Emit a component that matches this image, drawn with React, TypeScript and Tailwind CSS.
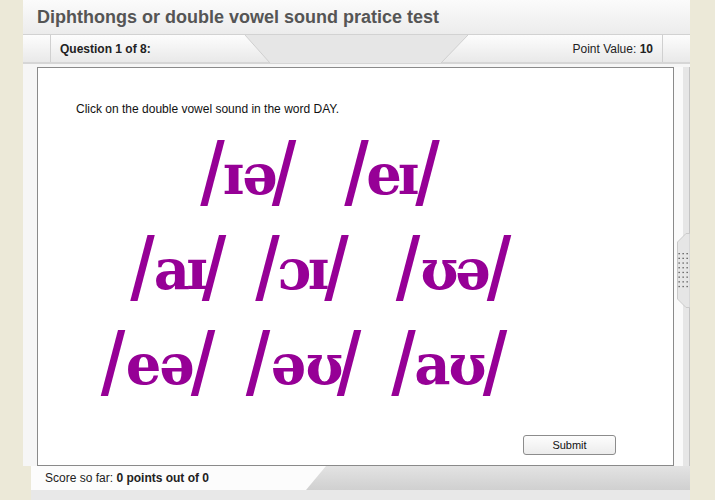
import React from 'react'

// centres of each glyph's ink, measured off the reference (svg coordinates)
const sounds: { y: number; parts: [string, number][] }[] = [
  { y: 75, parts: [['/', 136.5], ['ɪ', 157.5], ['ə', 184], ['/', 208]] },
  { y: 75, parts: [['/', 280.5], ['e', 308], ['ɪ', 332.5], ['/', 351.5]] },
  { y: 170, parts: [['/', 66.5], ['a', 96], ['ɪ', 121], ['/', 138]] },
  { y: 170, parts: [['/', 191.5], ['ɔ', 218.5], ['ɪ', 242.5], ['/', 260.5]] },
  { y: 170, parts: [['/', 332], ['ʊ', 363.5], ['ə', 397], ['/', 423]] },
  { y: 265, parts: [['/', 37], ['e', 67.5], ['ə', 101], ['/', 127]] },
  { y: 265, parts: [['/', 182], ['ə', 212.5], ['ʊ', 248.5], ['/', 273]] },
  { y: 265, parts: [['/', 327.5], ['a', 356.5], ['ʊ', 391.5], ['/', 419]] },
]

function SoundChart() {
  return (
    <svg width="470" height="305" viewBox="0 0 470 305" className="block bg-white">
      {sounds.map((s, i) => (
        <g key={i} fill="#960096" fontWeight="bold" textAnchor="middle">
          {s.parts.map(([ch, cx], j) =>
            ch === '/' ? (
              <text
                key={j}
                transform={`translate(${cx} ${s.y + 5}) scale(0.84 1)`}
                fontSize="80"
                style={{ fontFamily: '"DejaVu Sans", sans-serif' }}
              >
                /
              </text>
            ) : (
              <text key={j} x={cx} y={s.y} fontSize="56" style={{ fontFamily: '"DejaVu Serif", serif' }}>
                {ch}
              </text>
            )
          )}
        </g>
      ))}
    </svg>
  )
}

function Grip() {
  return (
    <svg width="16" height="75" viewBox="0 0 16 75" className="absolute left-0 top-[166px]">
      <path d="M12 0.5 H16 V74.5 H12 L3.5 66 V9 Z" fill="#e6e6e6" stroke="#cacaca" />
      {Array.from({ length: 8 }).map((_, r) =>
        [0, 1, 2].map((c) => (
          <rect key={`${r}-${c}`} x={4.5 + c * 4} y={20 + r * 4.7} width="1.3" height="1.3" fill="#555" />
        ))
      )}
    </svg>
  )
}

export default function App() {
  return (
    <div
      className="w-[715px] h-[500px] bg-[#ece9d8] overflow-hidden flex"
      style={{ fontFamily: '"Liberation Sans", Arial, sans-serif' }}
    >
      <div className="ml-[23px] w-[667px] h-full flex flex-col">
        {/* title */}
        <div className="h-[35px] flex items-center pl-[14px] pt-[1px] bg-gradient-to-b from-[#fbfbfb] to-[#ececec] border-b border-[#d2d2d2]">
          <h1 className="text-[18px] font-bold text-[#555]">
            Diphthongs or double vowel sound pratice test
          </h1>
        </div>

        {/* question bar */}
        <div className="relative h-[29px] flex bg-gradient-to-b from-[#fdfdfd] to-[#e9e9e9] border-b-2 border-[#d6d6d6] text-[12px] text-[#222]">
          <svg width="667" height="28" className="absolute left-0 top-0" viewBox="0 0 667 28">
            <polygon points="222,0 445,0 418,28 247,28" fill="#e6e6e6" />
            <line x1="222" y1="0" x2="247" y2="28" stroke="#cfcfcf" />
            <line x1="445" y1="0" x2="418" y2="28" stroke="#cfcfcf" />
          </svg>
          <div className="w-[28px] border-r border-[#d0d0d0]" />
          <div className="relative flex-1 flex items-center justify-between pl-[9px] pr-[9px]">
            <span className="font-bold">Question 1 of 8:</span>
            <span>
              Point Value: <b>10</b>
            </span>
          </div>
          <div className="w-[28px] border-l border-[#d0d0d0]" />
        </div>

        {/* body */}
        <div className="flex-1 flex bg-[#f6f6f6] pt-[3px]">
          <div className="w-[14px]" />
          <div className="w-[637px] bg-white border border-[#8a8a8a] flex flex-col">
            <p className="pl-[38px] pt-[34px] text-[12px] text-[#111] leading-[14px]">
              Click on the double vowel sound in the word DAY.
            </p>
            <div className="pl-[38px] pt-[3px]">
              <SoundChart />
            </div>
            <div className="flex justify-end pr-[57px] pt-[11px]">
              <button className="w-[93px] h-[20px] rounded-[3px] border border-[#8c8c8c] bg-gradient-to-b from-[#fdfdfd] to-[#ececec] text-[11px] text-[#111]">
                Submit
              </button>
            </div>
          </div>
          <div className="relative w-[16px] flex">
            <div className="w-[9px] bg-[#fafafa]" />
            <div className="w-[7px] bg-[#e6e6e6] border-r border-[#c4c4c4]" />
            <Grip />
          </div>
        </div>

        {/* footer */}
        <div className="h-[24px] flex">
          <div className="w-[8px] bg-[#ece9d8]" />
          <div className="relative flex-1 flex bg-gradient-to-b from-[#e3e3e3] to-[#d0d0d0]">
            <svg width="295" height="24" className="absolute left-0 top-0" viewBox="0 0 295 24">
              <polygon points="0,0 295,0 275,24 0,24" fill="#fcfcfc" />
            </svg>
            <div className="relative pl-[14px] flex items-center text-[12px] text-[#222]">
              Score so far:&nbsp;<b>0 points out of 0</b>
            </div>
          </div>
        </div>
        <div className="h-[10px] flex">
          <div className="w-[8px] bg-[#ece9d8]" />
          <div className="flex-1 bg-[#e8e8e8]" />
        </div>
      </div>
    </div>
  )
}
